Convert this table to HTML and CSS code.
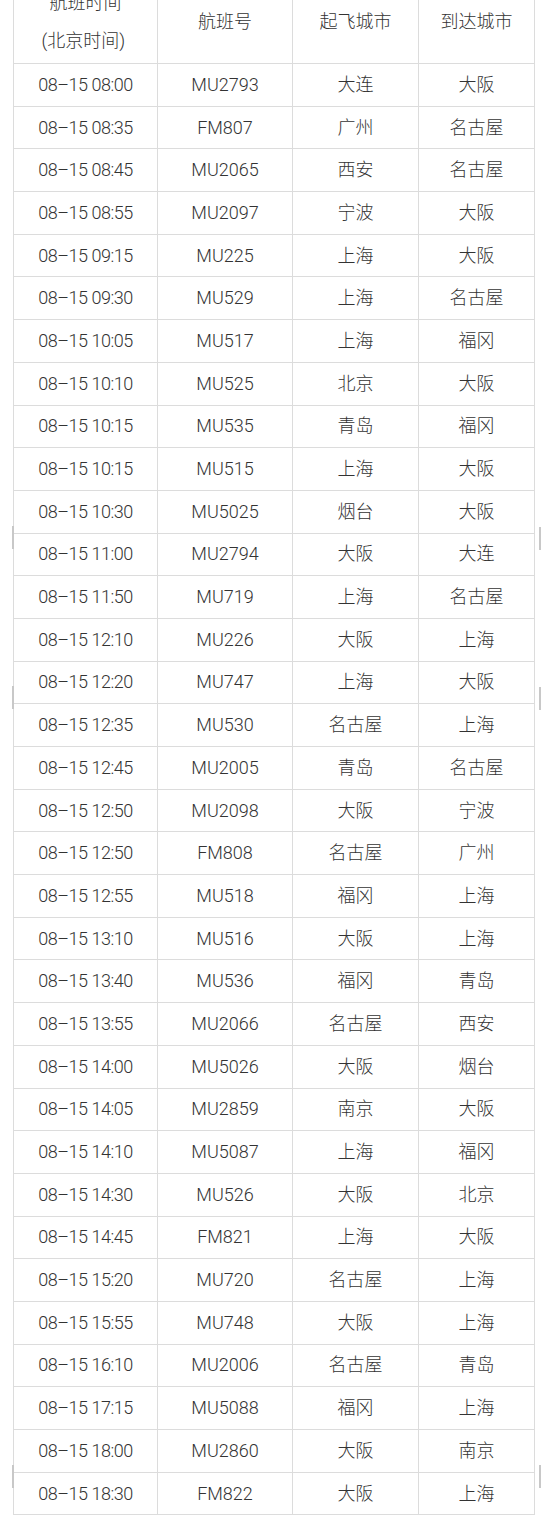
FILE: index.html
```html
<!DOCTYPE html>
<html lang="zh-CN">
<head>
<meta charset="utf-8">
<title>航班时刻表</title>
<link rel="stylesheet" href="styles.css">
</head>
<body>
<div class="page">
<table class="flights">
<colgroup><col class="c1"><col class="c2"><col class="c3"><col class="c4"></colgroup>
<thead>
<tr class="head"><th>航班时间<br>(北京时间)&nbsp;</th><th>航班号</th><th>起飞城市</th><th>到达城市</th></tr>
</thead>
<tbody>
<tr><td>08–15 08:00</td><td>MU2793</td><td>大连</td><td>大阪</td></tr>
<tr><td>08–15 08:35</td><td>FM807</td><td>广州</td><td>名古屋</td></tr>
<tr><td>08–15 08:45</td><td>MU2065</td><td>西安</td><td>名古屋</td></tr>
<tr><td>08–15 08:55</td><td>MU2097</td><td>宁波</td><td>大阪</td></tr>
<tr><td>08–15 09:15</td><td>MU225</td><td>上海</td><td>大阪</td></tr>
<tr><td>08–15 09:30</td><td>MU529</td><td>上海</td><td>名古屋</td></tr>
<tr><td>08–15 10:05</td><td>MU517</td><td>上海</td><td>福冈</td></tr>
<tr><td>08–15 10:10</td><td>MU525</td><td>北京</td><td>大阪</td></tr>
<tr><td>08–15 10:15</td><td>MU535</td><td>青岛</td><td>福冈</td></tr>
<tr><td>08–15 10:15</td><td>MU515</td><td>上海</td><td>大阪</td></tr>
<tr><td>08–15 10:30</td><td>MU5025</td><td>烟台</td><td>大阪</td></tr>
<tr><td>08–15 11:00</td><td>MU2794</td><td>大阪</td><td>大连</td></tr>
<tr><td>08–15 11:50</td><td>MU719</td><td>上海</td><td>名古屋</td></tr>
<tr><td>08–15 12:10</td><td>MU226</td><td>大阪</td><td>上海</td></tr>
<tr><td>08–15 12:20</td><td>MU747</td><td>上海</td><td>大阪</td></tr>
<tr><td>08–15 12:35</td><td>MU530</td><td>名古屋</td><td>上海</td></tr>
<tr><td>08–15 12:45</td><td>MU2005</td><td>青岛</td><td>名古屋</td></tr>
<tr><td>08–15 12:50</td><td>MU2098</td><td>大阪</td><td>宁波</td></tr>
<tr><td>08–15 12:50</td><td>FM808</td><td>名古屋</td><td>广州</td></tr>
<tr><td>08–15 12:55</td><td>MU518</td><td>福冈</td><td>上海</td></tr>
<tr><td>08–15 13:10</td><td>MU516</td><td>大阪</td><td>上海</td></tr>
<tr><td>08–15 13:40</td><td>MU536</td><td>福冈</td><td>青岛</td></tr>
<tr><td>08–15 13:55</td><td>MU2066</td><td>名古屋</td><td>西安</td></tr>
<tr><td>08–15 14:00</td><td>MU5026</td><td>大阪</td><td>烟台</td></tr>
<tr><td>08–15 14:05</td><td>MU2859</td><td>南京</td><td>大阪</td></tr>
<tr><td>08–15 14:10</td><td>MU5087</td><td>上海</td><td>福冈</td></tr>
<tr><td>08–15 14:30</td><td>MU526</td><td>大阪</td><td>北京</td></tr>
<tr><td>08–15 14:45</td><td>FM821</td><td>上海</td><td>大阪</td></tr>
<tr><td>08–15 15:20</td><td>MU720</td><td>名古屋</td><td>上海</td></tr>
<tr><td>08–15 15:55</td><td>MU748</td><td>大阪</td><td>上海</td></tr>
<tr><td>08–15 16:10</td><td>MU2006</td><td>名古屋</td><td>青岛</td></tr>
<tr><td>08–15 17:15</td><td>MU5088</td><td>福冈</td><td>上海</td></tr>
<tr><td>08–15 18:00</td><td>MU2860</td><td>大阪</td><td>南京</td></tr>
<tr><td>08–15 18:30</td><td>FM822</td><td>大阪</td><td>上海</td></tr>
</tbody>
</table>
<div class="mark mark-l1"></div>
<div class="mark mark-l2"></div>
<div class="mark mark-l3"></div>
<div class="mark mark-r1"></div>
<div class="mark mark-r2"></div>
<div class="mark mark-r3"></div>
</div>
</body>
</html>
```
FILE: styles.css
```css
html, body {
  margin: 0;
  padding: 0;
  background: #ffffff;
}

.page {
  position: relative;
  width: 550px;
  height: 1518px;
  overflow: hidden;
  padding-left: 13px;
  box-sizing: border-box;
}

.flights {
  border-collapse: collapse;
  table-layout: fixed;
  width: 521px;
  margin-top: -21px;
  font-family: Roboto, "Noto Sans CJK SC", sans-serif;
  font-weight: 300;
  font-size: 18px;
  color: #333333;
}

.c1 { width: 144px; }
.c2 { width: 135px; }
.c3 { width: 126px; }
.c4 { width: 116px; }

.flights th,
.flights td {
  border: 1px solid #dcdcdc;
  text-align: center;
  vertical-align: middle;
  padding: 0;
  white-space: nowrap;
}

.flights th {
  font-weight: 300;
  line-height: 38px;
  height: 84px;
  box-sizing: border-box;
}

.flights td {
  height: 42.7px;
  line-height: 20px;
  box-sizing: border-box;
}

.flights td:first-child {
  letter-spacing: -0.5px;
}

.mark {
  position: absolute;
  width: 2px;
  height: 23px;
  background: #c8c8c8;
}

.mark-l1 { left: 12px; top: 526px; }
.mark-l2 { left: 12px; top: 686px; }
.mark-l3 { left: 12px; top: 1465px; }
.mark-r1 { left: 539px; top: 527px; }
.mark-r2 { left: 539px; top: 687px; }
.mark-r3 { left: 539px; top: 1465px; }
```
